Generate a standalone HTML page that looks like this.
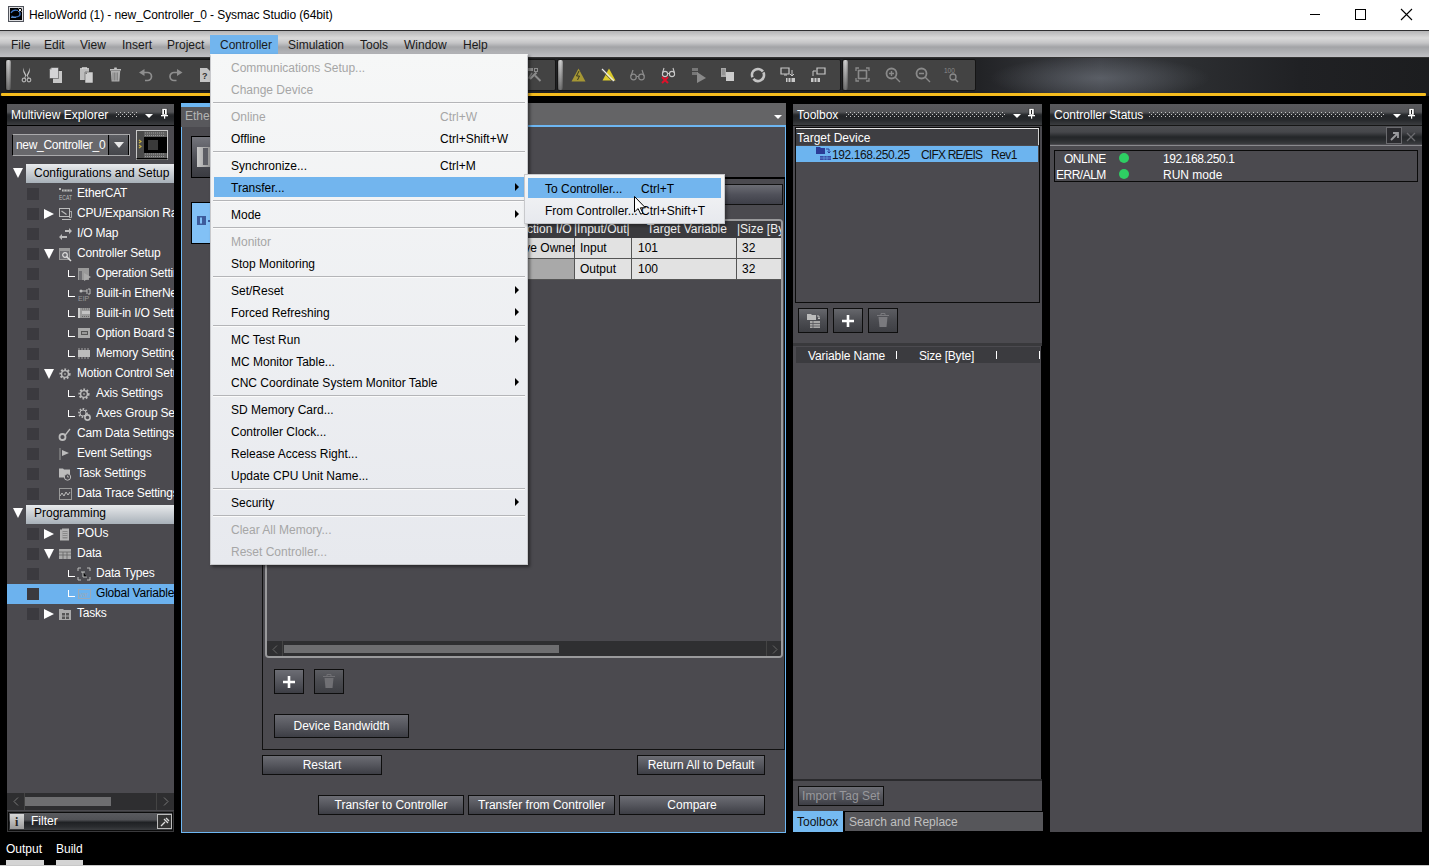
<!DOCTYPE html>
<html><head><meta charset="utf-8">
<style>
*{box-sizing:border-box;margin:0;padding:0}
html,body{width:1429px;height:866px;overflow:hidden;background:#000;font-family:"Liberation Sans",sans-serif;font-size:12px;position:relative}
.a{position:absolute}
.t{position:absolute;white-space:nowrap;line-height:14px}
svg{position:absolute;overflow:visible}
#title{left:0;top:0;width:1429px;height:30px;background:#fff}
#menubar{left:0;top:30px;width:1429px;height:28px;border-top:1px solid #2e2e30;border-bottom:1px solid #333;
 background:linear-gradient(#b4b4b6 0px,#dadada 7px,#c4c4c6 12px,#a3a4a7 16px,#b0b1b4 21px,#c0c0c4 26px)}
#menubar .t{top:7px;color:#1a1a1a;font-size:12px}
#topdark{left:0;top:58px;width:1429px;height:38px;background:radial-gradient(ellipse 110px 22px at 1100px 20px,rgba(120,126,136,.5),transparent),linear-gradient(90deg,#1d1e20 0,#222326 980px,#3c3e43 1100px,#2c2e31 1190px,#202124 1300px,#1c1d1f 1429px)}
.tb{position:absolute;top:59px;height:32px;background:#434343;border:1px solid #151515;border-radius:2px}
.grip{position:absolute;top:0;left:0;width:5px;height:30px;background:linear-gradient(90deg,#9a9a9a,#d8d8d8 40%,#c0c0c0 70%,#8a8a8a),linear-gradient(#fff,#888);background-blend-mode:multiply;border-radius:2px}
#yellow{left:1px;top:93px;width:1425px;height:3px;background:#f6bd1e;border-radius:1px}
.panel{position:absolute;background:#4b4a4f;overflow:hidden}
.phdr{position:absolute;left:0;top:0;right:0;height:21px;background:linear-gradient(#59595c 0,#545558 8px,#2c2e31 10.5px,#232528 12px,#27292c 16px,#3b3d40 21px)}
.phdr .t{left:4px;top:4px;color:#fff;font-size:12px}
.dots{position:absolute;top:7px;height:6px;background-image:radial-gradient(circle at 1px 1px,#8c8c8e 0.7px,transparent 0.8px);background-size:3px 3px}
.dd{position:absolute;top:10px;width:0;height:0;border-left:4px solid transparent;border-right:4px solid transparent;border-top:4px solid #fff}
.menu{position:absolute;background:linear-gradient(#f6f7f7,#e7e9ee);border:1px solid #c8c9cc;box-shadow:2px 2px 3px rgba(0,0,0,.45)}
.mi{position:absolute;left:20px;color:#000;font-size:12px;white-space:nowrap;line-height:14px}
.dis{color:#a6a6a6 !important}
.sc{position:absolute;left:229px;color:#000;font-size:12px;white-space:nowrap;line-height:14px}
.sep{position:absolute;left:2px;right:2px;height:2px;border-top:1px solid #b4b5b8;border-bottom:1px solid #fbfbfb}
.arr{position:absolute;left:304px;width:0;height:0;border-top:4px solid transparent;border-bottom:4px solid transparent;border-left:4px solid #000}
.btn{position:absolute;padding-top:1px;background:linear-gradient(#6c6d74,#55565d 50%,#3d3e45);border:1px solid #0e0e0e;color:#fff;font-size:12px;text-align:center;white-space:nowrap;line-height:17px}
.cb{position:absolute;width:12px;height:12px;background:#3b3a3f}
.tri-r{position:absolute;width:0;height:0;border-top:5px solid transparent;border-bottom:5px solid transparent;border-left:10px solid #fff}
.tri-d{position:absolute;width:0;height:0;border-left:5px solid transparent;border-right:5px solid transparent;border-top:10px solid #fff}
.ell{position:absolute;width:7px;height:7px;border-left:1px solid #fff;border-bottom:1px solid #fff}
.ico{position:absolute;width:13px;height:13px}
</style></head><body>
<svg width="0" height="0" style="position:absolute"><defs><pattern id="dp" width="4" height="4" patternUnits="userSpaceOnUse"><rect x="0" y="0" width="1" height="1" fill="#c4c4c4"/><rect x="2" y="2" width="1" height="1" fill="#c4c4c4"/></pattern></defs></svg>

<!-- TITLE BAR -->
<div id="title" class="a">
  <svg style="left:8px;top:6px" width="16" height="16"><rect x="0" y="0" width="16" height="16" fill="#50535b"/><rect x="1" y="1" width="14" height="14" fill="#dcdde0"/><rect x="2" y="2" width="12" height="12" fill="#000"/><path d="M3 7Q5 3 10 4.5M3.5 10Q7 12.5 12 9.5M11 5Q13 7.5 11.5 10" stroke="#3f78c8" stroke-width="1.1" fill="none"/><path d="M3 11.5h5" stroke="#6aa0e0" stroke-width="0.8"/><path d="M10.5 2.5l3 3M13.5 2.5l-3 3" stroke="#fff" stroke-width="0.9"/></svg>
  <div class="t" style="left:29px;top:8px;color:#000;font-size:12px;letter-spacing:-0.1px">HelloWorld (1) - new_Controller_0 - Sysmac Studio (64bit)</div>
  <div class="a" style="left:1310px;top:14px;width:10px;height:1px;background:#000"></div>
  <div class="a" style="left:1355px;top:9px;width:11px;height:11px;border:1px solid #000"></div>
  <svg style="left:1400px;top:8px" width="13" height="13"><path d="M1 1L12 12M12 1L1 12" stroke="#000" stroke-width="1.1"/></svg>
</div>

<!-- MENU BAR -->
<div id="menubar" class="a">
  <div class="a" style="left:210px;top:4px;width:68px;height:22px;background:#72b5ee"></div>
  <div class="t" style="left:11px">File</div>
  <div class="t" style="left:44px">Edit</div>
  <div class="t" style="left:80px">View</div>
  <div class="t" style="left:122px">Insert</div>
  <div class="t" style="left:167px">Project</div>
  <div class="t" style="left:220px">Controller</div>
  <div class="t" style="left:288px">Simulation</div>
  <div class="t" style="left:360px">Tools</div>
  <div class="t" style="left:404px">Window</div>
  <div class="t" style="left:463px">Help</div>
</div>

<!-- TOOLBAR AREA -->
<div id="topdark" class="a"></div>
<div class="tb" style="left:5px;width:551px"><div class="grip" style="left:0"></div></div>
<div class="tb" style="left:557px;width:284px"><div class="grip" style="left:0"></div></div>
<div class="tb" style="left:842px;width:134px"><div class="grip" style="left:0"></div></div>
<!-- toolbar icons seg1 -->
<svg style="left:21px;top:67px" width="11" height="16"><path d="M2 0.5Q1.5 5 4.5 9.5L5.5 8.5Q3 4 2 0.5z" fill="#c4c4c4"/><path d="M9 0.5Q9.5 5 6.5 9.5L5.5 8.5Q8 4 9 0.5z" fill="#c4c4c4"/><circle cx="3" cy="13" r="1.8" fill="none" stroke="#b0b0b0" stroke-width="1.2"/><circle cx="8" cy="13" r="1.8" fill="none" stroke="#b0b0b0" stroke-width="1.2"/><path d="M4.5 9L3.5 11.5M6.5 9l1 2.5" stroke="#b0b0b0"/></svg>
<svg style="left:49px;top:67px" width="14" height="16"><path d="M4 4h9v12H4z" fill="#c8c8c8"/><path d="M3.5 3.5h9" stroke="#333" stroke-width="0.6"/><path d="M2.5 0.5h7v11h-9V2.5z" fill="#d4d4d6" stroke="#3a3a3a" stroke-width="0.5"/><path d="M0.5 2.5h2v-2" fill="#888"/></svg>
<svg style="left:79px;top:67px" width="15" height="16"><path d="M1 1h9v12H1z" fill="#bdbdbd"/><path d="M3.5 2V0.8h4V2" stroke="#d8d8d8" fill="none" stroke-width="1.2"/><path d="M6 5h8v11H6z" fill="#cfcfcf" stroke="#3a3a3a" stroke-width="0.5"/><path d="M6 7l2-2v2z" fill="#777"/></svg>
<svg style="left:110px;top:67px" width="11" height="15"><rect x="4" y="0.5" width="3" height="1.5" rx="0.7" fill="#c8c8c8"/><rect x="0" y="2" width="11" height="1.6" fill="#bcbcbc"/><path d="M0.8 4h9.4l-0.8 10.5H1.6z" fill="#b0b0b0"/><path d="M3 5.5v8M4.5 5.5v8M6 5.5v8M7.5 5.5v8" stroke="#6a6a6a" stroke-width="0.6"/></svg>
<svg style="left:139px;top:69px" width="15" height="13"><path d="M0 3.5L5.5 0v7z" fill="#8e8e8e"/><path d="M5 3.5h3.5a4 4 0 0 1 0 8H6" stroke="#8e8e8e" stroke-width="1.7" fill="none"/></svg>
<svg style="left:168px;top:69px" width="15" height="13"><path d="M14.5 3.5L9 0v7z" fill="#8e8e8e"/><path d="M9.5 3.5H6a4 4 0 0 0 0 8h2.5" stroke="#8e8e8e" stroke-width="1.7" fill="none"/></svg>
<svg style="left:199px;top:67px" width="12" height="15"><path d="M1 1h7l3 3v11H1z" fill="#c4c4c4"/><text x="3" y="12" font-size="9" font-weight="bold" fill="#333" font-family="Liberation Sans">?</text></svg>
<!-- seg2 partial icon -->
<svg style="left:527px;top:66px" width="16" height="17"><rect x="0" y="2" width="6" height="3" fill="#8c8c8c"/><rect x="7.5" y="2.5" width="3" height="3" fill="none" stroke="#8c8c8c"/><path d="M1.5 12.5L5 7" stroke="#7a7a7a" stroke-width="1.4"/><path d="M3 13L9.5 6.5" stroke="#8c8c8c" stroke-width="2.2"/><path d="M8 9.5l5.5 5.5" stroke="#8c8c8c" stroke-width="2"/></svg>
<!-- seg3 icons -->
<svg style="left:571px;top:68px" width="15" height="14"><path d="M7.5 0.5L14.5 13.5H0.5z" fill="#a69734"/><path d="M8 3L5.5 8h3L6.5 12" stroke="#3a3a20" stroke-width="1" fill="none"/></svg>
<svg style="left:601px;top:67px" width="15" height="15"><path d="M8 1.5L14.5 13.5H1.5z" fill="#dccb2a"/><path d="M1 2l12 12" stroke="#e8e8e8" stroke-width="1.2"/><path d="M0 3l12 12" stroke="#555" stroke-width="0.8"/></svg>
<svg style="left:630px;top:69px" width="15" height="12" fill="none" stroke="#8c8c8c" stroke-width="1.2"><circle cx="3.5" cy="8" r="2.8"/><circle cx="11.5" cy="8" r="2.8"/><path d="M6.3 7.5h2.4M1 7L3 1M14 7L12 1"/></svg>
<svg style="left:660px;top:67px" width="16" height="17"><g fill="none" stroke="#c8c8c8" stroke-width="1.1"><circle cx="5" cy="7" r="2.6"/><circle cx="12" cy="7" r="2.6"/><path d="M7.6 6.5h1.8M2.5 6L4 1M14.5 6L13 1"/></g><path d="M2 10l6 6M8 10l-6 6" stroke="#e0102a" stroke-width="2"/></svg>
<svg style="left:691px;top:67px" width="15" height="16"><path d="M1 1h6v3H1zM1 5h6v3H1z" fill="#777"/><path d="M6 5l9 6-9 5z" fill="#8a8a8a"/></svg>
<svg style="left:720px;top:67px" width="15" height="15"><path d="M1 1h5v9H1z" fill="#a8a8a8"/><path d="M2 3h3M2 5h3M2 7h3" stroke="#666" stroke-width="0.6"/><path d="M6 5h8v9H6z" fill="#cccccc"/></svg>
<svg style="left:750px;top:67px" width="16" height="16"><circle cx="8" cy="8" r="6" fill="none" stroke="#c4c4c4" stroke-width="2.6" stroke-dasharray="16.85 2" transform="rotate(-26 8 8)"/></svg>
<svg style="left:780px;top:67px" width="16" height="16"><path d="M1 1h8v6H1z" fill="none" stroke="#c8c8c8" stroke-width="1.2"/><path d="M4 8h3" stroke="#c8c8c8"/><path d="M12 3v6l-2-2M12 9l2-2" stroke="#c8c8c8" fill="none"/><path d="M6 11h9v4H6z" fill="#c8c8c8"/><path d="M8 11v4M11 11v4" stroke="#434343"/></svg>
<svg style="left:810px;top:67px" width="16" height="16"><path d="M7 1h8v6H7z" fill="none" stroke="#c8c8c8" stroke-width="1.2"/><path d="M3 9V4h3" stroke="#c8c8c8" fill="none"/><path d="M1 11h9v4H1z" fill="#c8c8c8"/><path d="M4 11v4M7 11v4" stroke="#434343"/></svg>
<!-- seg4 icons -->
<svg style="left:855px;top:67px" width="15" height="15" fill="none" stroke="#8a8a8a" stroke-width="1.3"><path d="M1 4V1h3M11 1h3v3M14 11v3h-3M4 14H1v-3"/><rect x="3.5" y="3.5" width="8" height="8" stroke-width="1.6"/></svg>
<svg style="left:885px;top:67px" width="16" height="16" fill="none" stroke="#8a8a8a" stroke-width="1.8"><circle cx="6.5" cy="6.5" r="5"/><path d="M10 10l5 5M4 6.5h5M6.5 4v5" stroke-width="1.4"/></svg>
<svg style="left:915px;top:67px" width="16" height="16" fill="none" stroke="#8a8a8a" stroke-width="1.8"><circle cx="6.5" cy="6.5" r="5"/><path d="M10 10l5 5M4 6.5h5" stroke-width="1.4"/></svg>
<svg style="left:944px;top:67px" width="16" height="16"><text x="0" y="6" font-size="6.5" fill="#8a8a8a" font-family="Liberation Sans">100</text><circle cx="9" cy="10" r="3" fill="none" stroke="#8a8a8a" stroke-width="1.3"/><path d="M11 12l3 3" stroke="#8a8a8a" stroke-width="1.5"/></svg>
<div id="yellow" class="a"></div>

<!-- LEFT PANEL -->
<div class="panel" style="left:7px;top:104px;width:167px;height:728px">
  <div class="phdr"><div class="t">Multiview Explorer</div><svg style="left:109px;top:8px" width="22" height="5"><rect width="22" height="5" fill="url(#dp)"/></svg><div class="dd" style="left:138px"></div>
  <svg style="left:154px;top:4px" width="8" height="12"><path d="M1 0.5h5v6.5H1z" fill="#fff" stroke="#000" stroke-width="0.4"/><rect x="3" y="2" width="1" height="4" fill="#222"/><path d="M0 7h7v1.3H0z" fill="#fff"/><rect x="3" y="8" width="1.2" height="2.7" fill="#fff"/></svg></div>
  <div class="a" style="left:0;top:21px;width:167px;height:1px;background:#000"></div>
  <div class="a" style="left:5px;top:30px;width:118px;height:22px;border:1px solid #a9a9ab;border-left:1px solid #000;background:#68686c">
      <div class="t" style="left:3px;top:3px;color:#fff;letter-spacing:-0.3px">new_Controller_0</div>
      <div class="a" style="left:95px;top:0;width:21px;height:20px;background:linear-gradient(#5e5f64,#45464b);border-left:1px solid #000;border-right:1px solid #000"></div>
      <div class="a" style="left:101px;top:7px;width:0;height:0;border-left:5px solid transparent;border-right:5px solid transparent;border-top:6px solid #e8e8e8"></div>
  </div>
  <svg style="left:129px;top:26px" width="32" height="30"><rect x="0.5" y="0.5" width="31" height="29" fill="#2a2a2a" stroke="#c8c8c8"/><rect x="1" y="1" width="30" height="28" fill="#555"/><rect x="1" y="1" width="7" height="28" fill="#4a4a4a"/><rect x="8" y="2" width="22" height="5" fill="#606060"/><path d="M9 3h20M9 5.5h20" stroke="#9a9a9a" stroke-dasharray="1 1" stroke-width="1"/><rect x="8" y="23" width="22" height="5" fill="#606060"/><path d="M9 24h20M9 26.5h20" stroke="#9a9a9a" stroke-dasharray="1 1" stroke-width="1"/><rect x="8" y="7" width="23" height="16" fill="#000"/><rect x="12" y="10" width="10" height="10" fill="#3a3a3a"/><path d="M3 10l2 1.5-2 1.5M3 15l2 1.5-2 1.5" stroke="#c8b040" fill="none" stroke-width="1.2"/><rect x="0.5" y="28" width="31" height="1.5" fill="#000"/></svg>
  <div class="tri-d" style="left:6px;top:64px"></div>
  <div class="a" style="left:19px;top:60px;width:148px;height:19px;background:linear-gradient(#e8eaec,#c8cdd2 50%,#a8b1b9)"></div>
  <div class="t" style="left:27px;top:62px;color:#000">Configurations and Setup</div>
  <div class="tri-d" style="left:6px;top:404px"></div>
  <div class="a" style="left:19px;top:401px;width:148px;height:19px;background:linear-gradient(#e8eaec,#c8cdd2 50%,#a8b1b9)"></div>
  <div class="t" style="left:27px;top:402px;color:#000">Programming</div>

  <div class="cb" style="left:20px;top:84px"></div>
  <svg style="left:52px;top:84px" width="13" height="13"><rect x="0" y="0" width="2" height="2" fill="#bcbcbc"/><path d="M3 1.5h10v2H3z" fill="#bcbcbc"/><path d="M5 1.5v2M8 1.5v2M11 1.5v2" stroke="#4b4a4f" stroke-width="0.7"/><text x="0" y="12" font-size="7.5" font-family="Liberation Sans" fill="#bcbcbc" textLength="13" lengthAdjust="spacingAndGlyphs">ECAT</text></svg>
  <div class="t" style="left:70px;top:82px;letter-spacing:-0.2px;color:#fff">EtherCAT</div>
  <div class="cb" style="left:20px;top:104px"></div>
  <div class="tri-r" style="left:37px;top:105px"></div>
  <svg style="left:52px;top:104px" width="13" height="13"><rect x="0.5" y="0.5" width="10" height="8" fill="none" stroke="#bcbcbc"/><path d="M2.5 3l5 3.5" stroke="#bcbcbc" stroke-width="1.2"/><rect x="10.5" y="3.5" width="2" height="6" fill="none" stroke="#bcbcbc" stroke-width="0.8"/><path d="M3 11.5h9" stroke="#bcbcbc"/></svg>
  <div class="t" style="left:70px;top:102px;letter-spacing:-0.2px;color:#fff">CPU/Expansion Racks</div>
  <div class="cb" style="left:20px;top:124px"></div>
  <svg style="left:52px;top:124px" width="13" height="13"><path d="M6 2h4V0l3 3-3 3V4H6z" fill="#bcbcbc"/><path d="M8 8H3V6L0 9l3 3v-2h5z" fill="#bcbcbc"/></svg>
  <div class="t" style="left:70px;top:122px;letter-spacing:-0.2px;color:#fff">I/O Map</div>
  <div class="cb" style="left:20px;top:144px"></div>
  <div class="tri-d" style="left:37px;top:145px"></div>
  <svg style="left:52px;top:144px" width="13" height="13"><rect x="0" y="0" width="11" height="12" fill="#9a9a9a"/><rect x="1" y="3" width="9" height="8" fill="#6e6e72"/><circle cx="6" cy="7" r="2.3" fill="none" stroke="#ddd" stroke-width="1.2"/><path d="M7.5 8.5l4.5 4.5" stroke="#ddd" stroke-width="1.5"/></svg>
  <div class="t" style="left:70px;top:142px;letter-spacing:-0.2px;color:#fff">Controller Setup</div>
  <div class="cb" style="left:20px;top:164px"></div>
  <div class="ell" style="left:61px;top:166px"></div>
  <svg style="left:71px;top:164px" width="13" height="13"><rect x="0" y="0" width="11" height="12" fill="#9a9a9a"/><rect x="1" y="3" width="3" height="9" fill="#6e6e72"/><path d="M6 5l7 4-7 4z" fill="#aaa"/></svg>
  <div class="t" style="left:89px;top:162px;letter-spacing:-0.2px;color:#fff">Operation Settings</div>
  <div class="cb" style="left:20px;top:184px"></div>
  <div class="ell" style="left:61px;top:186px"></div>
  <svg style="left:71px;top:184px" width="13" height="13"><circle cx="3" cy="3" r="1.5" fill="#bcbcbc"/><path d="M4 3h5M9 1v5M10 1h2v5h-2" stroke="#bcbcbc" fill="none"/><text x="0" y="12.5" font-size="7" font-family="Liberation Sans" fill="#9a9a9a">EIP</text></svg>
  <div class="t" style="left:89px;top:182px;letter-spacing:-0.2px;color:#fff">Built-in EtherNet/IP Port Settings</div>
  <div class="cb" style="left:20px;top:204px"></div>
  <div class="ell" style="left:61px;top:206px"></div>
  <svg style="left:71px;top:204px" width="13" height="13"><rect x="0" y="0" width="12" height="10" fill="#9a9a9a"/><rect x="0" y="0" width="2" height="10" fill="#ccc"/><rect x="4" y="3" width="8" height="3" fill="#c4c4c4"/><path d="M4 1h8M4 8.5h8" stroke="#6a6a6a" stroke-dasharray="1 1"/></svg>
  <div class="t" style="left:89px;top:202px;letter-spacing:-0.2px;color:#fff">Built-in I/O Settings</div>
  <div class="cb" style="left:20px;top:224px"></div>
  <div class="ell" style="left:61px;top:226px"></div>
  <svg style="left:71px;top:224px" width="13" height="13"><rect x="0" y="0" width="12" height="10" fill="#aaa"/><rect x="3" y="3" width="7" height="4" fill="#555"/><rect x="4" y="4" width="5" height="2" fill="#999"/></svg>
  <div class="t" style="left:89px;top:222px;letter-spacing:-0.2px;color:#fff">Option Board Settings</div>
  <div class="cb" style="left:20px;top:244px"></div>
  <div class="ell" style="left:61px;top:246px"></div>
  <svg style="left:71px;top:244px" width="13" height="13"><rect x="0" y="2" width="12" height="7" fill="#bcbcbc"/><path d="M1 0v11M4 0v11M7 0v11M10 0v11" stroke="#bcbcbc" stroke-width="0.8"/></svg>
  <div class="t" style="left:89px;top:242px;letter-spacing:-0.2px;color:#fff">Memory Settings</div>
  <div class="cb" style="left:20px;top:264px"></div>
  <div class="tri-d" style="left:37px;top:265px"></div>
  <svg style="left:52px;top:264px" width="13" height="13"><circle cx="6" cy="6" r="4.6" fill="none" stroke="#bcbcbc" stroke-width="2" stroke-dasharray="1.8 1.6"/><circle cx="6" cy="6" r="3.4" fill="none" stroke="#bcbcbc" stroke-width="1.4"/><rect x="5" y="5" width="2" height="2" fill="#888"/></svg>
  <div class="t" style="left:70px;top:262px;letter-spacing:-0.2px;color:#fff">Motion Control Setup</div>
  <div class="cb" style="left:20px;top:284px"></div>
  <div class="ell" style="left:61px;top:286px"></div>
  <svg style="left:71px;top:284px" width="13" height="13"><circle cx="6" cy="6" r="4.6" fill="none" stroke="#bcbcbc" stroke-width="2" stroke-dasharray="1.8 1.6"/><circle cx="6" cy="6" r="3.4" fill="none" stroke="#bcbcbc" stroke-width="1.4"/><rect x="5" y="5" width="2" height="2" fill="#888"/></svg>
  <div class="t" style="left:89px;top:282px;letter-spacing:-0.2px;color:#fff">Axis Settings</div>
  <div class="cb" style="left:20px;top:304px"></div>
  <div class="ell" style="left:61px;top:306px"></div>
  <svg style="left:71px;top:304px" width="13" height="13"><circle cx="5" cy="5" r="4" fill="none" stroke="#bcbcbc" stroke-width="1.8" stroke-dasharray="1.6 1.4"/><circle cx="5" cy="5" r="3" fill="none" stroke="#bcbcbc" stroke-width="1"/><circle cx="9.5" cy="9.5" r="2.6" fill="#4b4a4f" stroke="#bcbcbc" stroke-width="1.6"/></svg>
  <div class="t" style="left:89px;top:302px;letter-spacing:-0.2px;color:#fff">Axes Group Settings</div>
  <div class="cb" style="left:20px;top:324px"></div>
  <svg style="left:52px;top:324px" width="13" height="13"><path d="M5.5 8L11 1" stroke="#bcbcbc" stroke-width="1.3"/><circle cx="3.5" cy="9" r="3" fill="none" stroke="#bcbcbc" stroke-width="1.8"/></svg>
  <div class="t" style="left:70px;top:322px;letter-spacing:-0.2px;color:#fff">Cam Data Settings</div>
  <div class="cb" style="left:20px;top:344px"></div>
  <svg style="left:52px;top:344px" width="13" height="13"><path d="M1 0v12" stroke="#9a9a9a"/><path d="M3 2l7 3-7 3z" fill="#bcbcbc"/></svg>
  <div class="t" style="left:70px;top:342px;letter-spacing:-0.2px;color:#fff">Event Settings</div>
  <div class="cb" style="left:20px;top:364px"></div>
  <svg style="left:52px;top:364px" width="13" height="13"><path d="M0 0.5h4l1 1h6v8H0z" fill="#bcbcbc"/><circle cx="8.5" cy="9" r="3.2" fill="#4b4a4f" stroke="#bcbcbc"/><path d="M8.5 7.5v1.5h1.5" stroke="#bcbcbc" stroke-width="0.8" fill="none"/></svg>
  <div class="t" style="left:70px;top:362px;letter-spacing:-0.2px;color:#fff">Task Settings</div>
  <div class="cb" style="left:20px;top:384px"></div>
  <svg style="left:52px;top:384px" width="13" height="13"><rect x="0.5" y="0.5" width="12" height="11" fill="none" stroke="#999"/><path d="M1 8l2-3 2 3 2-4 2 3 2-3" stroke="#bcbcbc" fill="none"/></svg>
  <div class="t" style="left:70px;top:382px;letter-spacing:-0.2px;color:#fff">Data Trace Settings</div>
  <div class="cb" style="left:20px;top:424px"></div>
  <div class="tri-r" style="left:37px;top:425px"></div>
  <svg style="left:52px;top:424px" width="13" height="13"><path d="M1 1.5h2v-1h7v12H1z" fill="#b4b4b4"/><rect x="3.5" y="3" width="5" height="7.5" fill="#8a8a8a"/><path d="M3.5 4.5h5M3.5 6.5h5M3.5 8.5h5" stroke="#c4c4c4" stroke-width="0.7"/></svg>
  <div class="t" style="left:70px;top:422px;letter-spacing:-0.2px;color:#fff">POUs</div>
  <div class="cb" style="left:20px;top:444px"></div>
  <div class="tri-d" style="left:37px;top:445px"></div>
  <svg style="left:52px;top:444px" width="13" height="13"><rect x="0" y="1" width="12" height="10" fill="#aaa"/><path d="M0 4h12M0 7h12M4 4v7M8 4v7" stroke="#666" stroke-width="0.8"/></svg>
  <div class="t" style="left:70px;top:442px;letter-spacing:-0.2px;color:#fff">Data</div>
  <div class="cb" style="left:20px;top:464px"></div>
  <div class="ell" style="left:61px;top:466px"></div>
  <svg style="left:71px;top:464px" width="13" height="13"><path d="M0 3V0h3M9 0h3v3M12 9v3H9M3 12H0V9" stroke="#bcbcbc" fill="none"/><path d="M3 4h4M5 4v5h4" stroke="#bcbcbc"/></svg>
  <div class="t" style="left:89px;top:462px;letter-spacing:-0.2px;color:#fff">Data Types</div>
  <div class="a" style="left:0;top:480px;width:167px;height:20px;background:#6cb2ee"></div>
  <div class="cb" style="left:20px;top:484px"></div>
  <div class="ell" style="left:61px;top:486px"></div>
  <svg style="left:71px;top:484px" width="13" height="13"><rect x="0.5" y="1.5" width="12" height="9" fill="none" stroke="#9ab"/><text x="1" y="9" font-size="6.5" font-family="Liberation Sans" fill="#9ab">var</text></svg>
  <div class="t" style="left:89px;top:482px;letter-spacing:-0.2px;color:#000">Global Variables</div>
  <div class="cb" style="left:20px;top:504px"></div>
  <div class="tri-r" style="left:37px;top:505px"></div>
  <svg style="left:52px;top:504px" width="13" height="13"><path d="M0 1h4l1 1h7v10H0z" fill="#aaa"/><path d="M3 5h7v6H3z" fill="#555"/><path d="M6.5 5v6M3 8h7" stroke="#aaa"/></svg>
  <div class="t" style="left:70px;top:502px;letter-spacing:-0.2px;color:#fff">Tasks</div>
  <div class="a" style="left:0;top:689px;width:167px;height:17px;background:#2e2e30"></div>
  <div class="a" style="left:0;top:689px;width:18px;height:17px;background:#2e2e30;border-right:1px solid #444"></div>
  <svg style="left:6px;top:693px" width="6" height="9"><path d="M5 0.5L1 4.5 5 8.5" stroke="#777" fill="none"/></svg>
  <div class="a" style="left:149px;top:689px;width:18px;height:17px;background:#2e2e30;border-left:1px solid #444"></div>
  <svg style="left:156px;top:693px" width="6" height="9"><path d="M1 0.5L5 4.5 1 8.5" stroke="#777" fill="none"/></svg>
  <div class="a" style="left:18px;top:693px;width:86px;height:9px;background:#6e6e70"></div>
  <div class="a" style="left:0;top:707px;width:167px;height:21px;background:#3a3a3c;padding:1px"><div style="width:165px;height:19px;border:1px solid #0c0c0c;background:linear-gradient(#5a5b5f,#505155 40%,#1f2124 55%,#2a2c2f 80%,#3a3c3f)"></div></div>
  <div class="a" style="left:3px;top:710px;width:14px;height:15px;background:linear-gradient(#d8d8d8,#9a9a9a)"></div>
  <div class="t" style="left:8px;top:711px;color:#222;font-weight:bold;font-family:'Liberation Serif';font-size:12px">i</div>
  <div class="t" style="left:24px;top:710px;color:#fff">Filter</div>
  <div class="a" style="left:150px;top:710px;width:15px;height:15px;border:1px solid #bbb;background:#333"></div>
  <svg style="left:153px;top:713px" width="10" height="10"><path d="M1 9l4-4M4 2l4 4M6 1l3 3" stroke="#ddd" stroke-width="1.3"/></svg>
</div>

<!-- CENTER PANEL -->
<div class="a" style="left:181px;top:103px;width:605px;height:22px;background:#646466"></div>
<div class="dd" style="left:774px;top:115px;border-left-width:4px;border-right-width:4px;border-top-width:4px"></div>
<div class="a" style="left:181px;top:125px;width:605px;height:2px;background:#6db6f2"></div>
<div class="a" style="left:181px;top:103px;width:200px;height:24px;background:#58585c;border-top:4px solid #6db6f2"></div>
<div class="t" style="left:185px;top:109px;color:#b4b4b4">EtherNet/IP Connection Settings</div>
<div class="panel" style="left:181px;top:127px;width:605px;height:706px;border-left:1px solid #6db6f2;border-right:1px solid #6db6f2;border-bottom:1px solid #6db6f2">
  <!-- device boxes -->
  <div class="a" style="left:9px;top:9px;width:60px;height:42px;background:linear-gradient(#74757c,#4a4b52 60%,#3a3b41);border:1px solid #000"></div>
  <div class="a" style="left:15px;top:20px;width:16px;height:20px;background:linear-gradient(90deg,#c9c9c9,#8a8a8a)"></div>
  <div class="a" style="left:21px;top:21px;width:5px;height:17px;background:#5c5d64"></div>
  <div class="a" style="left:9px;top:75px;width:60px;height:42px;background:#82c1f6;border:1px solid #000"></div>
  <svg style="left:15px;top:89px" width="16" height="10"><rect x="0" y="0" width="9" height="9" fill="#3d5c9c"/><rect x="3" y="1.5" width="2" height="6" fill="#82c1f6"/><rect x="11" y="4" width="3" height="2" fill="#3d5c9c"/></svg>
  <!-- right settings area -->
  <div class="a" style="left:80px;top:50px;width:523px;height:2px;background:#000"></div>
  <div class="a" style="left:80px;top:52px;width:523px;height:571px;border:1px solid #111;border-top:none"></div>
  <div class="a" style="left:84px;top:57px;width:517px;height:21px;background:linear-gradient(#6c6d74,#50515a 50%,#3e3f48);border:1px solid #111"></div>
  <!-- table -->
  <div class="a" style="left:83px;top:92px;width:518px;height:439px;border:2px solid #9a9a9c;border-radius:4px;background:#4a494e;overflow:hidden">
    <div class="a" style="left:0;top:0;width:516px;height:17px;background:#3b3b3f"></div>
    <div class="t" style="left:260px;top:1px;color:#f0f0f0">ction I/O</div>
    <div class="t" style="left:307px;top:1px;color:#f0f0f0">|Input/Out|</div>
    <div class="t" style="left:380px;top:1px;color:#f0f0f0">Target Variable</div>
    <div class="t" style="left:470px;top:1px;color:#f0f0f0">|Size [Byte]</div>
    <!-- rows -->
    <div class="a" style="left:0;top:17px;width:308px;height:21px;background:#dcdcdc;border-right:1px solid #555;border-bottom:1px solid #555"></div>
    <div class="t" style="left:240px;top:20px;color:#000">Slave Owner</div>
    <div class="a" style="left:308px;top:17px;width:57px;height:21px;background:#e2e2e2;border-right:1px solid #555;border-bottom:1px solid #555"></div>
    <div class="t" style="left:313px;top:20px;color:#000">Input</div>
    <div class="a" style="left:365px;top:17px;width:105px;height:21px;background:#e2e2e2;border-right:1px solid #555;border-bottom:1px solid #555"></div>
    <div class="t" style="left:371px;top:20px;color:#000">101</div>
    <div class="a" style="left:470px;top:17px;width:47px;height:21px;background:#e2e2e2;border-bottom:1px solid #555"></div>
    <div class="t" style="left:475px;top:20px;color:#000">32</div>
    <div class="a" style="left:0;top:38px;width:308px;height:21px;background:#a9a9a9;border-right:1px solid #555;border-bottom:1px solid #555"></div>
    <div class="a" style="left:308px;top:38px;width:57px;height:21px;background:#e2e2e2;border-right:1px solid #555;border-bottom:1px solid #555"></div>
    <div class="t" style="left:313px;top:41px;color:#000">Output</div>
    <div class="a" style="left:365px;top:38px;width:105px;height:21px;background:#e2e2e2;border-right:1px solid #555;border-bottom:1px solid #555"></div>
    <div class="t" style="left:371px;top:41px;color:#000">100</div>
    <div class="a" style="left:470px;top:38px;width:47px;height:21px;background:#e2e2e2;border-bottom:1px solid #555"></div>
    <div class="t" style="left:475px;top:41px;color:#000">32</div>
    <!-- h scrollbar -->
    <div class="a" style="left:0;top:420px;width:516px;height:16px;background:#2f2f31"></div>
    <div class="a" style="left:15px;top:420px;width:1px;height:16px;background:#444"></div>
    <div class="a" style="left:499px;top:420px;width:1px;height:16px;background:#444"></div>
    <svg style="left:5px;top:424px" width="6" height="9"><path d="M5 0.5L1 4.5 5 8.5" stroke="#666" fill="none"/></svg>
    <svg style="left:505px;top:424px" width="6" height="9"><path d="M1 0.5L5 4.5 1 8.5" stroke="#666" fill="none"/></svg>
    <div class="a" style="left:17px;top:424px;width:275px;height:8px;background:#6e6e70"></div>
  </div>
  <!-- buttons -->
  <div class="btn" style="left:92px;top:542px;width:30px;height:25px"></div>
  <svg style="left:100px;top:548px" width="14" height="14"><path d="M7 1v12M1 7h12" stroke="#fff" stroke-width="2.6"/></svg>
  <div class="btn" style="left:132px;top:542px;width:30px;height:25px;background:linear-gradient(#5c5d62,#4a4b50 50%,#3e3f44)"></div>
  <svg style="left:141px;top:547px" width="12" height="14"><path d="M0 2.5h12M4 2V0.5h4V2" stroke="#707074" fill="none"/><path d="M1.5 4h9l-1 10h-7z" fill="#707074"/></svg>
  <div class="btn" style="left:92px;top:587px;width:135px;height:24px;line-height:21px">Device Bandwidth</div>
  <div class="btn" style="left:80px;top:628px;width:120px;height:20px;line-height:17px">Restart</div>
  <div class="btn" style="left:455px;top:628px;width:128px;height:20px;line-height:17px">Return All to Default</div>
  <div class="btn" style="left:136px;top:668px;width:146px;height:20px;line-height:17px">Transfer to Controller</div>
  <div class="btn" style="left:286px;top:668px;width:147px;height:20px;line-height:17px">Transfer from Controller</div>
  <div class="btn" style="left:437px;top:668px;width:146px;height:20px;line-height:17px">Compare</div>
</div>

<!-- TOOLBOX PANEL -->
<div class="panel" style="left:793px;top:104px;width:249px;height:707px">
  <div class="phdr"><div class="t">Toolbox</div><svg style="left:53px;top:8px" width="159" height="5"><rect width="159" height="5" fill="url(#dp)"/></svg><div class="dd" style="left:220px"></div>
  <svg style="left:235px;top:4px" width="8" height="12"><path d="M1 0.5h5v6.5H1z" fill="#fff" stroke="#000" stroke-width="0.4"/><rect x="3" y="2" width="1" height="4" fill="#222"/><path d="M0 7h7v1.3H0z" fill="#fff"/><rect x="3" y="8" width="1.2" height="2.7" fill="#fff"/></svg></div>
  <div class="a" style="left:0;top:21px;width:249px;height:1px;background:#151515"></div>
  <!-- device list -->
  <div class="a" style="left:2px;top:23px;width:245px;height:176px;border:1px solid #0c0c0c;background:#4b4a4f">
    <div class="a" style="left:0;top:0;width:243px;height:17px;background:#3e3e42;border-top:1px solid #e6e6e6;border-right:1px solid #d0d0d0"></div>
    <div class="t" style="left:1px;top:3px;color:#fff">Target Device</div>
    <div class="a" style="left:0;top:18px;width:242px;height:16px;background:#6cb4ef"></div>
    <svg style="left:20px;top:19px" width="16" height="14"><path d="M0 0h4l1 1h4v6H0z" fill="#2b3c96"/><path d="M10 2h3v4l-1.5-1.5M13 6l1.5-1.5" stroke="#2b3c96" fill="none"/><path d="M4 9h11v4H4z" fill="#3a4ca6"/><path d="M4 11h11M8 9v4M11 9v4" stroke="#6cb4ef" stroke-width="0.6"/></svg>
    <div class="t" style="left:36px;top:20px;color:#111;letter-spacing:-0.4px">192.168.250.25</div>
    <div class="t" style="left:125px;top:20px;color:#111;letter-spacing:-0.8px">CIFX RE/EIS</div>
    <div class="t" style="left:195px;top:20px;color:#111;letter-spacing:-0.5px">Rev1</div>
  </div>
  <!-- buttons -->
  <div class="btn" style="left:5px;top:204px;width:30px;height:25px;background:linear-gradient(#66676c,#4c4d52 50%,#3c3d42)"></div>
  <svg style="left:12px;top:209px" width="16" height="16"><path d="M2 1h4l1 1h4v5H2z" fill="#bcbcbc"/><path d="M12 3h2v3l-1-1M14 6l1-1" stroke="#bcbcbc" fill="none"/><path d="M5 8h10v7H5z" fill="#a8a8a8"/><path d="M5 10.5h10M5 13h10M8 8v7" stroke="#55565b" stroke-width="0.8"/></svg>
  <div class="btn" style="left:40px;top:204px;width:30px;height:25px;background:linear-gradient(#66676c,#4c4d52 50%,#3c3d42)"></div>
  <svg style="left:48px;top:210px" width="14" height="14"><path d="M7 1v12M1 7h12" stroke="#fff" stroke-width="2.6"/></svg>
  <div class="btn" style="left:75px;top:204px;width:30px;height:25px;background:linear-gradient(#5c5d62,#4a4b50 50%,#3e3f44)"></div>
  <svg style="left:84px;top:209px" width="12" height="15"><path d="M0 2.5h12M4 2V0.5h4V2" stroke="#7a7a7e" fill="none"/><path d="M1.5 4h9l-1 10h-7z" fill="#7a7a7e"/></svg>
  <div class="a" style="left:0;top:239px;width:249px;height:3px;background:#39393c"></div>
  <div class="a" style="left:248px;top:242px;width:1px;height:434px;background:#000"></div>
  <div class="a" style="left:3px;top:243px;width:244px;height:16px;background:#3b3b3f"></div>
  <div class="t" style="left:15px;top:245px;color:#fff;letter-spacing:-0.1px">Variable Name</div>
  <div class="a" style="left:103px;top:247px;width:1px;height:8px;background:#fff"></div>
  <div class="t" style="left:126px;top:245px;color:#fff;letter-spacing:-0.2px">Size [Byte]</div>
  <div class="a" style="left:203px;top:247px;width:1px;height:8px;background:#fff"></div>
  <div class="a" style="left:246px;top:247px;width:1px;height:8px;background:#fff"></div>
  <div class="a" style="left:0;top:675px;width:249px;height:2px;background:#2a2a2d"></div>
  <div class="btn" style="left:5px;top:682px;width:86px;height:20px;color:#98989c;line-height:17px">Import Tag Set</div>
</div>
<div class="a" style="left:793px;top:811px;width:50px;height:21px;background:#75baf1"></div>
<div class="t" style="left:797px;top:815px;color:#111">Toolbox</div>
<div class="a" style="left:845px;top:812px;width:198px;height:19px;background:#56565a"></div>
<div class="t" style="left:849px;top:815px;color:#c0c0c0">Search and Replace</div>

<!-- CONTROLLER STATUS -->
<div class="panel" style="left:1050px;top:104px;width:372px;height:728px">
  <div class="phdr"><div class="t">Controller Status</div><svg style="left:99px;top:8px" width="236" height="5"><rect width="236" height="5" fill="url(#dp)"/></svg><div class="dd" style="left:343px"></div>
  <svg style="left:358px;top:4px" width="8" height="12"><path d="M1 0.5h5v6.5H1z" fill="#fff" stroke="#000" stroke-width="0.4"/><rect x="3" y="2" width="1" height="4" fill="#222"/><path d="M0 7h7v1.3H0z" fill="#fff"/><rect x="3" y="8" width="1.2" height="2.7" fill="#fff"/></svg></div>
  <div class="a" style="left:0;top:21px;width:372px;height:1px;background:#151515"></div>
  <div class="a" style="left:0;top:22px;width:372px;height:18px;background:linear-gradient(#4c4d51 0,#46474b 6px,#242629 11px,#2a2c2f 14px,#3a3c3f 18px)"></div>
  <div class="a" style="left:336px;top:23px;width:16px;height:17px;border:1px solid #6a6a6e;background:#2a2a2e"></div>
  <svg style="left:340px;top:27px" width="10" height="10"><path d="M1 9L8 2M3 2h5v5" stroke="#9a9a9e" stroke-width="1.8" fill="none"/></svg>
  <svg style="left:356px;top:28px" width="10" height="10"><path d="M1 1l8 8M9 1L1 9" stroke="#6a6a6e" stroke-width="1.3"/></svg>
  <div class="a" style="left:0;top:41px;width:372px;height:1px;background:#8a8a8e"></div>
  <div class="a" style="left:4px;top:46px;width:364px;height:32px;border:1px solid #0a0a0a"></div>
  <div class="t" style="left:14px;top:48px;color:#fff;letter-spacing:-0.5px">ONLINE</div>
  <div class="a" style="left:69px;top:49px;width:10px;height:10px;border-radius:50%;background:#2ecf63"></div>
  <div class="t" style="left:113px;top:48px;color:#fff;letter-spacing:-0.4px">192.168.250.1</div>
  <div class="t" style="left:6px;top:64px;color:#fff;letter-spacing:-0.5px">ERR/ALM</div>
  <div class="a" style="left:69px;top:65px;width:10px;height:10px;border-radius:50%;background:#2ecf63"></div>
  <div class="t" style="left:113px;top:64px;color:#fff">RUN mode</div>
</div>

<!-- BOTTOM TABS -->
<div class="t" style="left:6px;top:842px;color:#fff">Output</div>
<div class="a" style="left:6px;top:860px;width:38px;height:6px;background:#d4d4d4"></div>
<div class="t" style="left:56px;top:842px;color:#fff">Build</div>
<div class="a" style="left:56px;top:860px;width:27px;height:6px;background:#d4d4d4"></div>
<div class="a" style="left:0;top:865px;width:1429px;height:1px;background:#c8c8c8"></div>

<!-- CONTROLLER MENU -->
<div class="menu" style="left:210px;top:54px;width:318px;height:511px;border-top:2px solid #f6f7f7">
  <div class="mi dis" style="top:5px">Communications Setup...</div>
  <div class="mi dis" style="top:27px">Change Device</div>
  <div class="sep" style="top:46px"></div>
  <div class="mi dis" style="top:54px">Online</div>
  <div class="sc dis" style="top:54px">Ctrl+W</div>
  <div class="mi" style="top:76px">Offline</div>
  <div class="sc" style="top:76px">Ctrl+Shift+W</div>
  <div class="sep" style="top:95px"></div>
  <div class="mi" style="top:103px">Synchronize...</div>
  <div class="sc" style="top:103px">Ctrl+M</div>
  <div class="a" style="left:3px;top:121px;width:311px;height:20px;background:#72b5ee"></div>
  <div class="mi" style="top:125px">Transfer...</div>
  <div class="arr" style="top:127px"></div>
  <div class="sep" style="top:144px"></div>
  <div class="mi" style="top:152px">Mode</div>
  <div class="arr" style="top:154px"></div>
  <div class="sep" style="top:171px"></div>
  <div class="mi dis" style="top:179px">Monitor</div>
  <div class="mi" style="top:201px">Stop Monitoring</div>
  <div class="sep" style="top:220px"></div>
  <div class="mi" style="top:228px">Set/Reset</div>
  <div class="arr" style="top:230px"></div>
  <div class="mi" style="top:250px">Forced Refreshing</div>
  <div class="arr" style="top:252px"></div>
  <div class="sep" style="top:269px"></div>
  <div class="mi" style="top:277px">MC Test Run</div>
  <div class="arr" style="top:279px"></div>
  <div class="mi" style="top:299px">MC Monitor Table...</div>
  <div class="mi" style="top:320px">CNC Coordinate System Monitor Table</div>
  <div class="arr" style="top:322px"></div>
  <div class="sep" style="top:339px"></div>
  <div class="mi" style="top:347px">SD Memory Card...</div>
  <div class="mi" style="top:369px">Controller Clock...</div>
  <div class="mi" style="top:391px">Release Access Right...</div>
  <div class="mi" style="top:413px">Update CPU Unit Name...</div>
  <div class="sep" style="top:432px"></div>
  <div class="mi" style="top:440px">Security</div>
  <div class="arr" style="top:442px"></div>
  <div class="sep" style="top:459px"></div>
  <div class="mi dis" style="top:467px">Clear All Memory...</div>
  <div class="mi dis" style="top:489px">Reset Controller...</div>
</div>
<div class="menu" style="left:524px;top:174px;width:201px;height:50px;box-shadow:2px 2px 3px rgba(0,0,0,.35)">
  <div class="a" style="left:3px;top:3px;width:193px;height:20px;background:#72b5ee"></div>
  <div class="mi" style="left:20px;top:7px">To Controller...</div>
  <div class="mi" style="left:116px;top:7px">Ctrl+T</div>
  <div class="mi" style="left:20px;top:29px">From Controller...</div>
  <div class="mi" style="left:116px;top:29px">Ctrl+Shift+T</div>
</div>
<!-- mouse cursor -->
<svg style="left:634px;top:196px" width="12" height="19"><path d="M0.5 0.5v15.5l3.6-3.4 2.6 5.6 2.2-1-2.5-5.4h5z" fill="#fff" stroke="#000" stroke-width="1"/></svg>
</body></html>
